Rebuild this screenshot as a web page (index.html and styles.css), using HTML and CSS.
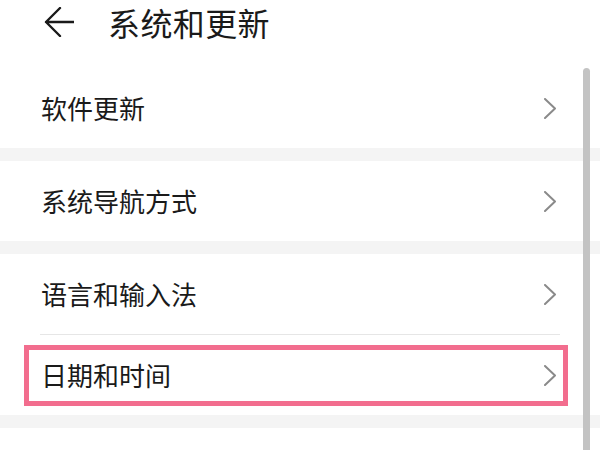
FILE: index.html
```html
<!DOCTYPE html>
<html lang="zh-CN">
<head>
<meta charset="utf-8">
<link rel="stylesheet" href="styles.css">
</head>
<body>
<div class="page">
  <header class="header">
    <svg class="back" width="30" height="30" viewBox="0 0 30 30"><path d="M30 15 H2 M16 1 L2 15 L16 29" fill="none" stroke="#1a1a1a" stroke-width="2.4" stroke-linecap="round" stroke-linejoin="round"/></svg>
    <h1 class="title">系统和更新</h1>
  </header>
  <div class="list">
    <div class="row"><span class="label">软件更新</span><svg class="chev" width="12" height="21" viewBox="0 0 12 21"><polyline points="1,1 11,10.5 1,20" fill="none" stroke="#8a8a8a" stroke-width="2" stroke-linecap="round" stroke-linejoin="round"/></svg></div>
    <div class="band"></div>
    <div class="row"><span class="label">系统导航方式</span><svg class="chev" width="12" height="21" viewBox="0 0 12 21"><polyline points="1,1 11,10.5 1,20" fill="none" stroke="#8a8a8a" stroke-width="2" stroke-linecap="round" stroke-linejoin="round"/></svg></div>
    <div class="band"></div>
    <div class="row"><span class="label">语言和输入法</span><svg class="chev" width="12" height="21" viewBox="0 0 12 21"><polyline points="1,1 11,10.5 1,20" fill="none" stroke="#8a8a8a" stroke-width="2" stroke-linecap="round" stroke-linejoin="round"/></svg></div>
    <div class="divider"></div>
    <div class="row row-hl"><span class="label">日期和时间</span><svg class="chev" width="12" height="21" viewBox="0 0 12 21"><polyline points="1,1 11,10.5 1,20" fill="none" stroke="#8a8a8a" stroke-width="2" stroke-linecap="round" stroke-linejoin="round"/></svg><div class="highlight"></div></div>
    <div class="band"></div>
    <div class="row"></div>
  </div>
  <div class="scrollbar"></div>
</div>
</body>
</html>
```
FILE: styles.css
```css
html, body {
  margin: 0;
  padding: 0;
  background: #ffffff;
}
body {
  font-family: "Noto Sans CJK SC", "Noto Sans", sans-serif;
  color: #1a1a1a;
  overflow: hidden;
}
.page {
  position: relative;
  width: 600px;
  height: 450px;
  overflow: hidden;
}
.header {
  display: flex;
  align-items: center;
  height: 44px;
  padding-left: 44px;
}
.back {
  display: block;
  flex: none;
}
.title {
  margin: 0 0 0 34px;
  font-size: 32px;
  font-weight: 400;
  line-height: 44px;
  letter-spacing: 0.4px;
}
.list {
  margin-top: 24px;
}
.row {
  position: relative;
  display: flex;
  align-items: center;
  justify-content: space-between;
  height: 80px;
  padding: 0 44px 0 41px;
}
.label {
  font-size: 26px;
  line-height: 1;
}
.chev {
  display: block;
  flex: none;
}
.band {
  height: 13px;
  background: #f4f4f4;
}
.divider {
  height: 1px;
  margin: 0 40px;
  background: #e6e6e6;
}
.highlight {
  position: absolute;
  left: 24px;
  top: 10px;
  width: 534px;
  height: 51px;
  border: 5px solid #f26d8e;
}
.scrollbar {
  position: absolute;
  left: 583px;
  top: 68px;
  width: 7px;
  height: 400px;
  border-radius: 3.5px;
  background: #c3c3c3;
}
```
